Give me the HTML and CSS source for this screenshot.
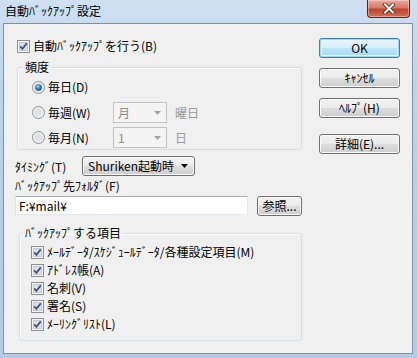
FILE: index.html
```html
<!DOCTYPE html>
<html lang="ja">
<head>
    <meta charset="UTF-8">
    <title>自動ﾊﾞｯｸｱｯﾌﾟ設定</title>
    <link rel="stylesheet" href="styles.css">
</head>
<body>
    <div class="window">
        <div class="titlebar">
            <span class="title">自動ﾊﾞｯｸｱｯﾌﾟ設定</span>
            <button class="close-btn" aria-label="閉じる">
                <svg width="14" height="11" viewBox="0 0 14 11">
                    <path d="M3 1.5 L11 9.5 M11 1.5 L3 9.5" stroke="#5a1e16" stroke-width="3.6" stroke-linecap="square"/>
                    <path d="M3 1.5 L11 9.5 M11 1.5 L3 9.5" stroke="#fff" stroke-width="2" stroke-linecap="square"/>
                </svg>
            </button>
        </div>

        <div class="client">
            <div class="main">
                <label class="check-row">
                    <svg class="checkbox" width="13" height="13" viewBox="0 0 13 13">
                        <rect x="0.5" y="0.5" width="12" height="12" fill="#f6f6f6" stroke="#8e8f8f"/>
                        <rect x="2.5" y="2.5" width="8" height="8" fill="#dde0e4" stroke="#c4c8cc"/>
                        <path d="M3.2 6.4 L5.4 8.8 L9.8 3.4" fill="none" stroke="#3f5592" stroke-width="1.8"/>
                    </svg>
                    <span>自動ﾊﾞｯｸｱｯﾌﾟを行う(B)</span>
                </label>

                <fieldset class="group group-freq">
                    <legend>頻度</legend>
                    <div class="freq-body">
                        <div class="freq-row first">
                            <label class="radio">
                                <svg width="13" height="13" viewBox="0 0 13 13">
                                    <defs>
                                        <radialGradient id="dot" cx="0.4" cy="0.35" r="0.7">
                                            <stop offset="0" stop-color="#9fdcf7"/>
                                            <stop offset="0.5" stop-color="#2a86c3"/>
                                            <stop offset="1" stop-color="#174a7d"/>
                                        </radialGradient>
                                    </defs>
                                    <circle cx="6.5" cy="6.5" r="6" fill="#f2f2f2" stroke="#8e8f8f"/>
                                    <circle cx="6.5" cy="6.5" r="4.3" fill="#d6dadf"/>
                                    <circle cx="6.5" cy="6.5" r="3.3" fill="url(#dot)"/>
                                </svg>
                                <span>毎日(D)</span>
                            </label>
                        </div>
                        <div class="freq-row second">
                            <label class="radio">
                                <svg width="13" height="13" viewBox="0 0 13 13">
                                    <circle cx="6.5" cy="6.5" r="6" fill="#f2f2f2" stroke="#8e8f8f"/>
                                    <circle cx="6.5" cy="6.5" r="4.3" fill="#dfe2e6"/>
                                </svg>
                                <span>毎週(W)</span>
                            </label>
                            <div class="combo combo-disabled">
                                <span>月</span>
                                <svg width="7" height="4" viewBox="0 0 7 4"><path d="M0 0 L7 0 L3.5 4 Z" fill="#a3a3a3"/></svg>
                            </div>
                            <span class="unit">曜日</span>
                        </div>
                        <div class="freq-row third">
                            <label class="radio">
                                <svg width="13" height="13" viewBox="0 0 13 13">
                                    <circle cx="6.5" cy="6.5" r="6" fill="#f2f2f2" stroke="#8e8f8f"/>
                                    <circle cx="6.5" cy="6.5" r="4.3" fill="#dfe2e6"/>
                                </svg>
                                <span>毎月(N)</span>
                            </label>
                            <div class="combo combo-disabled">
                                <span>1</span>
                                <svg width="7" height="4" viewBox="0 0 7 4"><path d="M0 0 L7 0 L3.5 4 Z" fill="#a3a3a3"/></svg>
                            </div>
                            <span class="unit">日</span>
                        </div>
                    </div>
                </fieldset>

                <div class="timing-row">
                    <span class="timing-label">ﾀｲﾐﾝｸﾞ(T)</span>
                    <div class="combo combo-list">
                        <span>Shuriken起動時</span>
                        <svg width="7" height="4" viewBox="0 0 7 4"><path d="M0 0 L7 0 L3.5 4 Z" fill="#000"/></svg>
                    </div>
                </div>

                <div class="folder-label">ﾊﾞｯｸｱｯﾌﾟ先ﾌｫﾙﾀﾞ(F)</div>
                <div class="folder-row">
                    <div class="textbox">F:¥mail¥</div>
                    <button class="btn btn-browse">参照...</button>
                </div>

                <fieldset class="group group-items">
                    <legend>ﾊﾞｯｸｱｯﾌﾟする項目</legend>
                    <div class="items-body">
                        <label class="item-row">
                            <svg width="13" height="13" viewBox="0 0 13 13">
                                <rect x="0.5" y="0.5" width="12" height="12" fill="#f6f6f6" stroke="#8e8f8f"/>
                                <rect x="2.5" y="2.5" width="8" height="8" fill="#dde0e4" stroke="#c4c8cc"/>
                                <path d="M3.2 6.4 L5.4 8.8 L9.8 3.4" fill="none" stroke="#3f5592" stroke-width="1.8"/>
                            </svg>
                            <span>ﾒｰﾙﾃﾞｰﾀ/ｽｹｼﾞｭｰﾙﾃﾞｰﾀ/各種設定項目(M)</span>
                        </label>
                        <label class="item-row">
                            <svg width="13" height="13" viewBox="0 0 13 13">
                                <rect x="0.5" y="0.5" width="12" height="12" fill="#f6f6f6" stroke="#8e8f8f"/>
                                <rect x="2.5" y="2.5" width="8" height="8" fill="#dde0e4" stroke="#c4c8cc"/>
                                <path d="M3.2 6.4 L5.4 8.8 L9.8 3.4" fill="none" stroke="#3f5592" stroke-width="1.8"/>
                            </svg>
                            <span>ｱﾄﾞﾚｽ帳(A)</span>
                        </label>
                        <label class="item-row">
                            <svg width="13" height="13" viewBox="0 0 13 13">
                                <rect x="0.5" y="0.5" width="12" height="12" fill="#f6f6f6" stroke="#8e8f8f"/>
                                <rect x="2.5" y="2.5" width="8" height="8" fill="#dde0e4" stroke="#c4c8cc"/>
                                <path d="M3.2 6.4 L5.4 8.8 L9.8 3.4" fill="none" stroke="#3f5592" stroke-width="1.8"/>
                            </svg>
                            <span>名刺(V)</span>
                        </label>
                        <label class="item-row">
                            <svg width="13" height="13" viewBox="0 0 13 13">
                                <rect x="0.5" y="0.5" width="12" height="12" fill="#f6f6f6" stroke="#8e8f8f"/>
                                <rect x="2.5" y="2.5" width="8" height="8" fill="#dde0e4" stroke="#c4c8cc"/>
                                <path d="M3.2 6.4 L5.4 8.8 L9.8 3.4" fill="none" stroke="#3f5592" stroke-width="1.8"/>
                            </svg>
                            <span>署名(S)</span>
                        </label>
                        <label class="item-row">
                            <svg width="13" height="13" viewBox="0 0 13 13">
                                <rect x="0.5" y="0.5" width="12" height="12" fill="#f6f6f6" stroke="#8e8f8f"/>
                                <rect x="2.5" y="2.5" width="8" height="8" fill="#dde0e4" stroke="#c4c8cc"/>
                                <path d="M3.2 6.4 L5.4 8.8 L9.8 3.4" fill="none" stroke="#3f5592" stroke-width="1.8"/>
                            </svg>
                            <span>ﾒｰﾘﾝｸﾞﾘｽﾄ(L)</span>
                        </label>
                    </div>
                </fieldset>
            </div>

            <div class="side">
                <button class="btn btn-default">OK</button>
                <button class="btn">ｷｬﾝｾﾙ</button>
                <button class="btn">ﾍﾙﾌﾟ(H)</button>
                <button class="btn btn-detail">詳細(E)...</button>
            </div>
        </div>
    </div>
</body>
</html>
```

FILE: styles.css
```css
* {
    margin: 0;
    padding: 0;
    box-sizing: border-box;
}

body {
    width: 417px;
    height: 358px;
    overflow: hidden;
    font-family: "Noto Sans CJK JP", "Noto Sans", sans-serif;
    font-size: 12px;
    color: #000;
}

/* Window frame (Aero glass) */
.window {
    width: 417px;
    height: 358px;
    display: flex;
    flex-direction: column;
    background: linear-gradient(180deg, #cfe0f2 0%, #bfd5ec 20%, #b6cde7 60%, #b3cbe5 100%);
}

.titlebar {
    height: 23px;
    display: flex;
    align-items: flex-start;
}

.title {
    padding: 3px 0 0 5px;
    line-height: 16px;
    color: #000;
}

.close-btn {
    margin-left: auto;
    margin-right: 7px;
    width: 43px;
    height: 18px;
    border: 1px solid #5e2219;
    border-top: none;
    border-radius: 0 0 4px 4px;
    background: linear-gradient(180deg, #e8a99c 0%, #d77a66 45%, #c0432b 55%, #d0705a 100%);
    box-shadow: inset 0 0 0 1px rgba(255, 220, 210, 0.5);
    display: flex;
    align-items: center;
    justify-content: center;
}

/* Client area */
.client {
    flex: 1;
    margin: 0 4px 4px 3px;
    border: 1px solid #7f90a4;
    background: #f0f0f0;
    display: flex;
}

.main {
    width: 298px;
    padding: 14px 0 0 11px;
    display: flex;
    flex-direction: column;
    align-items: flex-start;
}

.check-row {
    height: 16px;
    line-height: 16px;
    margin-left: 2px;
    display: flex;
    align-items: center;
    gap: 3px;
}

/* Group boxes */
.group {
    border: 1px solid #d5dfe5;
    border-radius: 3px;
    box-shadow: inset 1px 1px 0 #fff;
}

.group legend {
    line-height: 14px;
    padding: 0 2px;
}

.group-freq {
    margin: 6px 0 0 2px;
    width: 285px;
}

.group-freq legend {
    margin-left: 5px;
}

.freq-body {
    padding: 5px 0 1px 14px;
}

.freq-row {
    display: flex;
    align-items: center;
}

.freq-row.first {
    height: 16px;
}

.freq-row.second {
    height: 21px;
    margin-top: 7px;
}

.freq-row.third {
    height: 21px;
    margin-top: 4px;
}

.radio {
    width: 81px;
    display: flex;
    align-items: center;
    gap: 3px;
    line-height: 16px;
}

.combo {
    height: 21px;
    display: flex;
    align-items: center;
    justify-content: space-between;
    padding: 0 5px 0 4px;
    line-height: 16px;
}

.combo-disabled {
    width: 54px;
    border: 1px solid #c4c4c4;
    background: #f4f4f4;
    color: #8d8d8d;
}

.unit {
    margin-left: 8px;
    color: #9a9a9a;
}

.timing-row {
    height: 20px;
    margin-top: 6px;
    display: flex;
    align-items: center;
}

.timing-label {
    width: 67px;
}

.combo-list {
    width: 113px;
    height: 20px;
    border: 1px solid #707070;
    border-radius: 3px;
    background: linear-gradient(180deg, #f2f2f2 0%, #ebebeb 50%, #dddddd 51%, #cfcfcf 100%);
    box-shadow: inset 0 0 0 1px #fbfbfb;
    padding: 0 6px 0 5px;
}

.folder-label {
    margin-top: 3px;
    line-height: 14px;
}

.folder-row {
    margin-top: 3px;
    height: 20px;
    display: flex;
    align-items: flex-start;
}

.textbox {
    width: 233px;
    height: 19px;
    border: 1px solid #abadb3;
    border-color: #abadb3 #e3e9ef #e3e9ef #e2e3ea;
    background: #fff;
    padding-left: 3px;
    line-height: 17px;
}

/* Buttons */
.btn {
    font-family: inherit;
    font-size: 12px;
    color: #000;
    height: 20px;
    border: 1px solid #707070;
    border-radius: 3px;
    background: linear-gradient(180deg, #f2f2f2 0%, #ebebeb 50%, #dddddd 51%, #cfcfcf 100%);
    box-shadow: inset 0 0 0 1px #fbfbfb;
    line-height: 16px;
    text-align: center;
}

.btn-browse {
    width: 45px;
    margin-left: 9px;
}

.group-items {
    margin: 10px 0 0 4px;
    width: 283px;
}

.group-items legend {
    margin-left: 3px;
}

.items-body {
    padding: 3px 0 7px 11px;
}

.item-row {
    height: 18px;
    display: flex;
    align-items: center;
    gap: 3px;
    line-height: 16px;
}

.side {
    margin-left: 17px;
    padding-top: 14px;
    display: flex;
    flex-direction: column;
    gap: 10px;
}

.side .btn {
    width: 81px;
}

.btn-default {
    border-color: #3c7fb1;
    background: linear-gradient(180deg, #eaf6fd 0%, #d9f0fc 50%, #bee6fd 51%, #a7d9f5 100%);
    box-shadow: inset 0 0 0 1px #9fd8f5, inset 0 0 0 2px #e6f5fd;
}

.btn-detail {
    margin-top: 6px;
}
```
